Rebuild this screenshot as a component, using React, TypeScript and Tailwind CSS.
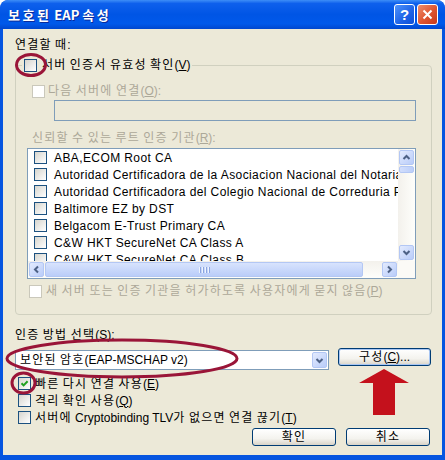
import React from "react";

const HANGUL = /([\uAC00-\uD7A3]+)/;

function K({ t, tr = "tracking-[1.2px]" }: { t: string; tr?: string }) {
  const parts = t.split(HANGUL);
  return (
    <>
      {parts.map((p, i) =>
        /[\uAC00-\uD7A3]/.test(p) ? (
          <span key={i} className={tr}>
            {p}
          </span>
        ) : (
          <React.Fragment key={i}>{p}</React.Fragment>
        )
      )}
    </>
  );
}

function Check({ checked = false, disabled = false }: { checked?: boolean; disabled?: boolean }) {
  return (
    <span
      className={`flex items-center justify-center w-[13px] h-[13px] shrink-0 border ${
        disabled
          ? "border-[#CAC8BB] bg-white"
          : "border-[#1C5180] bg-[linear-gradient(135deg,#D6D5CE,#FFFFFF)]"
      }`}
    >
      {checked && (
        <svg width="11" height="11" viewBox="0 0 11 11">
          <path d="M2.5 5.2 L4.6 7.4 L8.6 3.2" stroke="#21A121" strokeWidth="2" fill="none" />
        </svg>
      )}
    </span>
  );
}

function Arrow({ dir }: { dir: "up" | "down" | "left" | "right" }) {
  const d =
    dir === "up"
      ? "M1.5 6 L4.5 3 L7.5 6"
      : dir === "down"
      ? "M1.5 3 L4.5 6 L7.5 3"
      : dir === "left"
      ? "M6 1.5 L3 4.5 L6 7.5"
      : "M3 1.5 L6 4.5 L3 7.5";
  return (
    <svg width="9" height="9" viewBox="0 0 9 9">
      <path d={d} stroke="#4D6185" strokeWidth="2" fill="none" />
    </svg>
  );
}

function SBtn({ dir }: { dir: "up" | "down" | "left" | "right" }) {
  return (
    <div className="w-[17px] h-[17px] p-[1px] shrink-0">
      <div className="w-full h-full rounded-[2px] border border-[#B3C7F4] bg-[linear-gradient(135deg,#E3EBFE,#B9CCF9)] flex items-center justify-center">
        <Arrow dir={dir} />
      </div>
    </div>
  );
}

function XPButton({ children, def = false, w }: { children: React.ReactNode; def?: boolean; w: string }) {
  return (
    <div
      className={`${w} h-[18px] rounded-[3px] border border-[#003C74] bg-[linear-gradient(180deg,#FFFFFF_0%,#F4F3EE_60%,#D9D4C8_100%)] flex items-center justify-center text-[12px] leading-[16px] ${
        def ? "shadow-[inset_0_0_0_1px_#A8C6F3]" : ""
      }`}
    >
      {children}
    </div>
  );
}

const items = [
  "ABA,ECOM Root CA",
  "Autoridad Certificadora de la Asociacion Nacional del Notariado Mexicano",
  "Autoridad Certificadora del Colegio Nacional de Correduria Publica Mexicana",
  "Baltimore EZ by DST",
  "Belgacom E-Trust Primary CA",
  "C&W HKT SecureNet CA Class A",
  "C&W HKT SecureNet CA Class B",
];

export default function App() {
  return (
    <div className="relative w-[445px] h-[460px] rounded-t-[8px] bg-[#0655E0] flex flex-col font-['Liberation_Sans','Noto_Sans_CJK_KR',sans-serif] text-[12px] text-black overflow-hidden">
      {/* Title bar */}
      <div className="h-[29px] shrink-0 rounded-t-[8px] bg-[linear-gradient(180deg,#3D8EF7_0%,#0E60EC_12%,#0055E5_50%,#0059EA_82%,#0047CE_100%)] flex items-center pl-[8px] pr-[7px]">
        <div className="text-white font-bold text-[13px] leading-[16px] [text-shadow:1px_1px_0_#0A2A9A] font-['Noto_Sans_CJK_KR',sans-serif] mt-[1px]">
          <K t="보호된 EAP 속성" tr="tracking-[2.5px]" />
        </div>
        <div className="ml-auto flex gap-[2px]">
          <div className="w-[21px] h-[21px] rounded-[3px] border border-white bg-[linear-gradient(135deg,#4F93FB,#1D62E6_60%,#0B4FD8)] flex items-center justify-center text-white font-bold text-[15px] leading-[15px] font-['Liberation_Sans',sans-serif]">
            ?
          </div>
          <div className="w-[21px] h-[21px] rounded-[3px] border border-white bg-[linear-gradient(135deg,#EE8E6C,#DE5430_55%,#C6391A)] flex items-center justify-center">
            <svg width="11" height="11" viewBox="0 0 11 11">
              <path d="M1.5 1.5 L9.5 9.5 M9.5 1.5 L1.5 9.5" stroke="white" strokeWidth="2" />
            </svg>
          </div>
        </div>
      </div>

      {/* Client area */}
      <div className="flex-1 mx-[3px] mb-[5px] bg-[#ECE9D8] flex flex-col">
        <div className="ml-[12px] mt-[8px] h-[16px] leading-[16px]">
          <K t="연결할 때:" />
        </div>

        <fieldset className="mt-[4px] ml-[12px] w-[417px] border border-[#D0D0BF] rounded-[4px] pb-[15px]">
          <legend className="ml-[6px] px-[2px]">
            <div className="flex items-center gap-[5px] h-[16px] leading-[16px]">
              <Check />
              <span>
                <K t="서버 인증서 유효성 확인(" />
                <u>V</u>)
              </span>
            </div>
          </legend>

          <div className="mt-[10px] ml-[16px] flex items-center gap-[3px] h-[16px] leading-[16px] text-[#ACA899]">
            <Check disabled />
            <span>
              <K t="다음 서버에 연결(" />
              <u>O</u>):
            </span>
          </div>

          <div className="mt-[1px] ml-[38px] w-[362px] h-[21px] border border-[#7F9DB9] bg-[#ECE9D8]" />

          <div className="mt-[9px] ml-[16px] h-[16px] leading-[16px] text-[#ACA899]">
            <K t="신뢰할 수 있는 루트 인증 기관(" />
            <u>R</u>):
          </div>

          <div className="mt-[2px] ml-[11px] w-[389px] h-[131px] border border-[#7F9DB9] bg-white grid grid-cols-[1fr_17px] grid-rows-[1fr_17px]">
            <div className="overflow-hidden">
              {items.map((t) => (
                <div key={t} className="h-[17px] flex items-center pl-[6px] gap-[7px] whitespace-nowrap leading-[16px] tracking-[0.4px]">
                  <Check />
                  <span>{t}</span>
                </div>
              ))}
            </div>
            <div className="flex flex-col bg-[linear-gradient(90deg,#F3F1EC,#FEFEFB)]">
              <SBtn dir="up" />
              <div className="h-[8px] px-[1px] pb-[1px]">
                <div className="w-full h-full rounded-[2px] border border-[#B3C7F4] bg-[linear-gradient(90deg,#D2DEFC,#BBCEF9)]" />
              </div>
              <div className="flex-1" />
              <SBtn dir="down" />
            </div>
            <div className="flex bg-[linear-gradient(180deg,#F3F1EC,#FEFEFB)]">
              <SBtn dir="left" />
              <div className="w-[318px] h-[17px] py-[1px]">
                <div className="w-full h-full rounded-[2px] border border-[#B3C7F4] bg-[linear-gradient(180deg,#D8E3FD,#BACDF9)] flex items-center justify-center gap-[1px]">
                  <span className="w-[1px] h-[6px] bg-[#EEF4FE] border-r border-[#8CA5E0] box-content" />
                  <span className="w-[1px] h-[6px] bg-[#EEF4FE] border-r border-[#8CA5E0] box-content" />
                  <span className="w-[1px] h-[6px] bg-[#EEF4FE] border-r border-[#8CA5E0] box-content" />
                  <span className="w-[1px] h-[6px] bg-[#EEF4FE] border-r border-[#8CA5E0] box-content" />
                </div>
              </div>
              <div className="flex-1" />
              <SBtn dir="right" />
            </div>
            <div className="bg-[#FBFAF6]" />
          </div>

          <div className="mt-[4px] ml-[13px] flex items-center gap-[4px] h-[16px] leading-[16px] text-[#ACA899]">
            <Check disabled />
            <span>
              <K t="새 서버 또는 인증 기관을 허가하도록 사용자에게 묻지 않음(" />
              <u>P</u>)
            </span>
          </div>
        </fieldset>

        <div className="mt-[12px] ml-[12px] h-[16px] leading-[16px]">
          <K t="인증 방법 선택(" />
          <u>S</u>):
        </div>

        <div className="mt-[5px] ml-[12px] flex items-start">
          <div className="mt-[2px] w-[314px] h-[20px] border border-[#7F9DB9] bg-white flex items-center">
            <span className="pl-[4px] flex-1 leading-[16px]">
              <K t="보안된 암호(EAP-MSCHAP v2)" />
            </span>
            <div className="w-[17px] h-[18px] p-[1px]">
              <div className="w-full h-full rounded-[2px] border border-[#B3C7F4] bg-[linear-gradient(135deg,#E3EBFE,#B9CCF9)] flex items-center justify-center">
                <Arrow dir="down" />
              </div>
            </div>
          </div>
          <div className="ml-[9px]">
            <XPButton w="w-[93px]" def>
              <K t="구성(" />
              <u>C</u>)...
            </XPButton>
          </div>
        </div>

        <div className="mt-[5px] ml-[15px] flex flex-col">
          <div className="h-[17px] flex items-center gap-[4px] leading-[16px]">
            <Check checked />
            <span>
              <K t="빠른 다시 연결 사용(" />
              <u>E</u>)
            </span>
          </div>
          <div className="h-[17px] flex items-center gap-[4px] leading-[16px]">
            <Check />
            <span>
              <K t="격리 확인 사용(" />
              <u>Q</u>)
            </span>
          </div>
          <div className="h-[17px] flex items-center gap-[4px] leading-[16px]">
            <Check />
            <span>
              <K t="서버에 Cryptobinding TLV가 없으면 연결 끊기(" />
              <u>T</u>)
            </span>
          </div>
        </div>

        <div className="mt-[2px] mr-[12px] flex justify-end gap-[10px]">
          <XPButton w="w-[84px]">
            <K t="확인" />
          </XPButton>
          <XPButton w="w-[84px]">
            <K t="취소" />
          </XPButton>
        </div>
      </div>

      {/* Annotations overlay */}
      <svg className="absolute left-0 top-0 pointer-events-none" width="445" height="460" viewBox="0 0 445 460">
        <ellipse cx="31" cy="65" rx="14.5" ry="10.5" fill="none" stroke="#9A1538" strokeWidth="3" />
        <ellipse cx="122" cy="358.5" rx="115" ry="18.5" fill="none" stroke="#9A1538" strokeWidth="3" />
        <ellipse cx="23.5" cy="383" rx="11.5" ry="10" fill="none" stroke="#9A1538" strokeWidth="3" />
        <polygon points="384,369 409,383 395,383 395,415 373,415 373,383 359,383" fill="#C4111C" />
      </svg>
    </div>
  );
}
